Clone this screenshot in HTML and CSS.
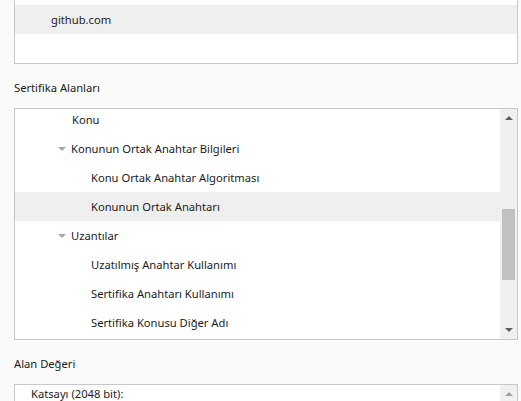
FILE: index.html
```html
<!DOCTYPE html>
<html lang="tr">
<head>
  <meta charset="UTF-8">
  <title>Sertifika Görüntüleyici</title>
  <link rel="stylesheet" href="styles.css">
</head>
<body>
  <div class="box hierarchy">
    <div class="row selected lvl0">github.com</div>
  </div>

  <div class="label">Sertifika Alanları</div>
  <div class="box fields">
    <div class="tree">
      <div class="row lvl1 leaf">Konu</div>
      <div class="row lvl1"><span class="twisty"></span>Konunun Ortak Anahtar Bilgileri</div>
      <div class="row lvl2">Konu Ortak Anahtar Algoritması</div>
      <div class="row lvl2 selected">Konunun Ortak Anahtarı</div>
      <div class="row lvl1"><span class="twisty"></span>Uzantılar</div>
      <div class="row lvl2">Uzatılmış Anahtar Kullanımı</div>
      <div class="row lvl2">Sertifika Anahtarı Kullanımı</div>
      <div class="row lvl2">Sertifika Konusu Diğer Adı</div>
    </div>
    <div class="scrollbar">
      <span class="arrow up"></span>
      <span class="track"><span class="thumb"></span></span>
      <span class="arrow down"></span>
    </div>
  </div>

  <div class="label">Alan Değeri</div>
  <div class="box value">
    <div class="value-text">Katsayı (2048 bit):</div>
    <div class="scrollbar">
      <span class="arrow up disabled"></span>
    </div>
  </div>
</body>
</html>
```

FILE: styles.css
```css
body {
  margin: 0;
  padding: 0 3px 0 14px;
  background-color: #fafafa;
  color: #1b1b1b;
  font-family: 'Noto Sans', 'Open Sans', sans-serif;
  font-size: 11.2px;
  overflow: hidden;
}
.box {
  background-color: #fff;
  border: 1px solid #c8c8c8;
}
.hierarchy {
  border-top: none;
  padding-top: 5px;
  height: 58px;
}
.row {
  height: 29px;
  line-height: 29px;
  white-space: nowrap;
  display: flex;
  align-items: center;
}
.row.selected {
  background-color: #efefef;
}
.lvl0 { padding-left: 36px; }
.lvl1 { padding-left: 43px; }
.lvl1.leaf { padding-left: 57px; }
.lvl2 { padding-left: 76px; }
.twisty {
  width: 0;
  height: 0;
  border-left: 4px solid transparent;
  border-right: 4px solid transparent;
  border-top: 4px solid #a6a6a6;
  margin-right: 5px;
}
.label {
  height: 16px;
  line-height: 16px;
  margin: 16px 0 12px;
}
.fields {
  display: flex;
  height: 230px;
  overflow: hidden;
}
.tree {
  flex: 1;
  margin-top: -4px;
}
.scrollbar {
  width: 17px;
  background-color: #f0f0f0;
  display: flex;
  flex-direction: column;
  align-items: center;
}
.track {
  flex: 1;
  width: 13px;
  padding-top: 82px;
}
.thumb {
  display: block;
  height: 71px;
  background-color: #c1c1c1;
}
.arrow {
  width: 0;
  height: 0;
  border-left: 4px solid transparent;
  border-right: 4px solid transparent;
  margin: 7px 0;
}
.arrow.up {
  border-bottom: 4px solid #606060;
}
.arrow.down {
  border-top: 4px solid #606060;
}
.arrow.disabled {
  border-bottom-color: #a3a3a3;
}
.value {
  display: flex;
  height: 60px;
}
.value-text {
  flex: 1;
  padding: 1px 16px;
  line-height: 16px;
}
```
